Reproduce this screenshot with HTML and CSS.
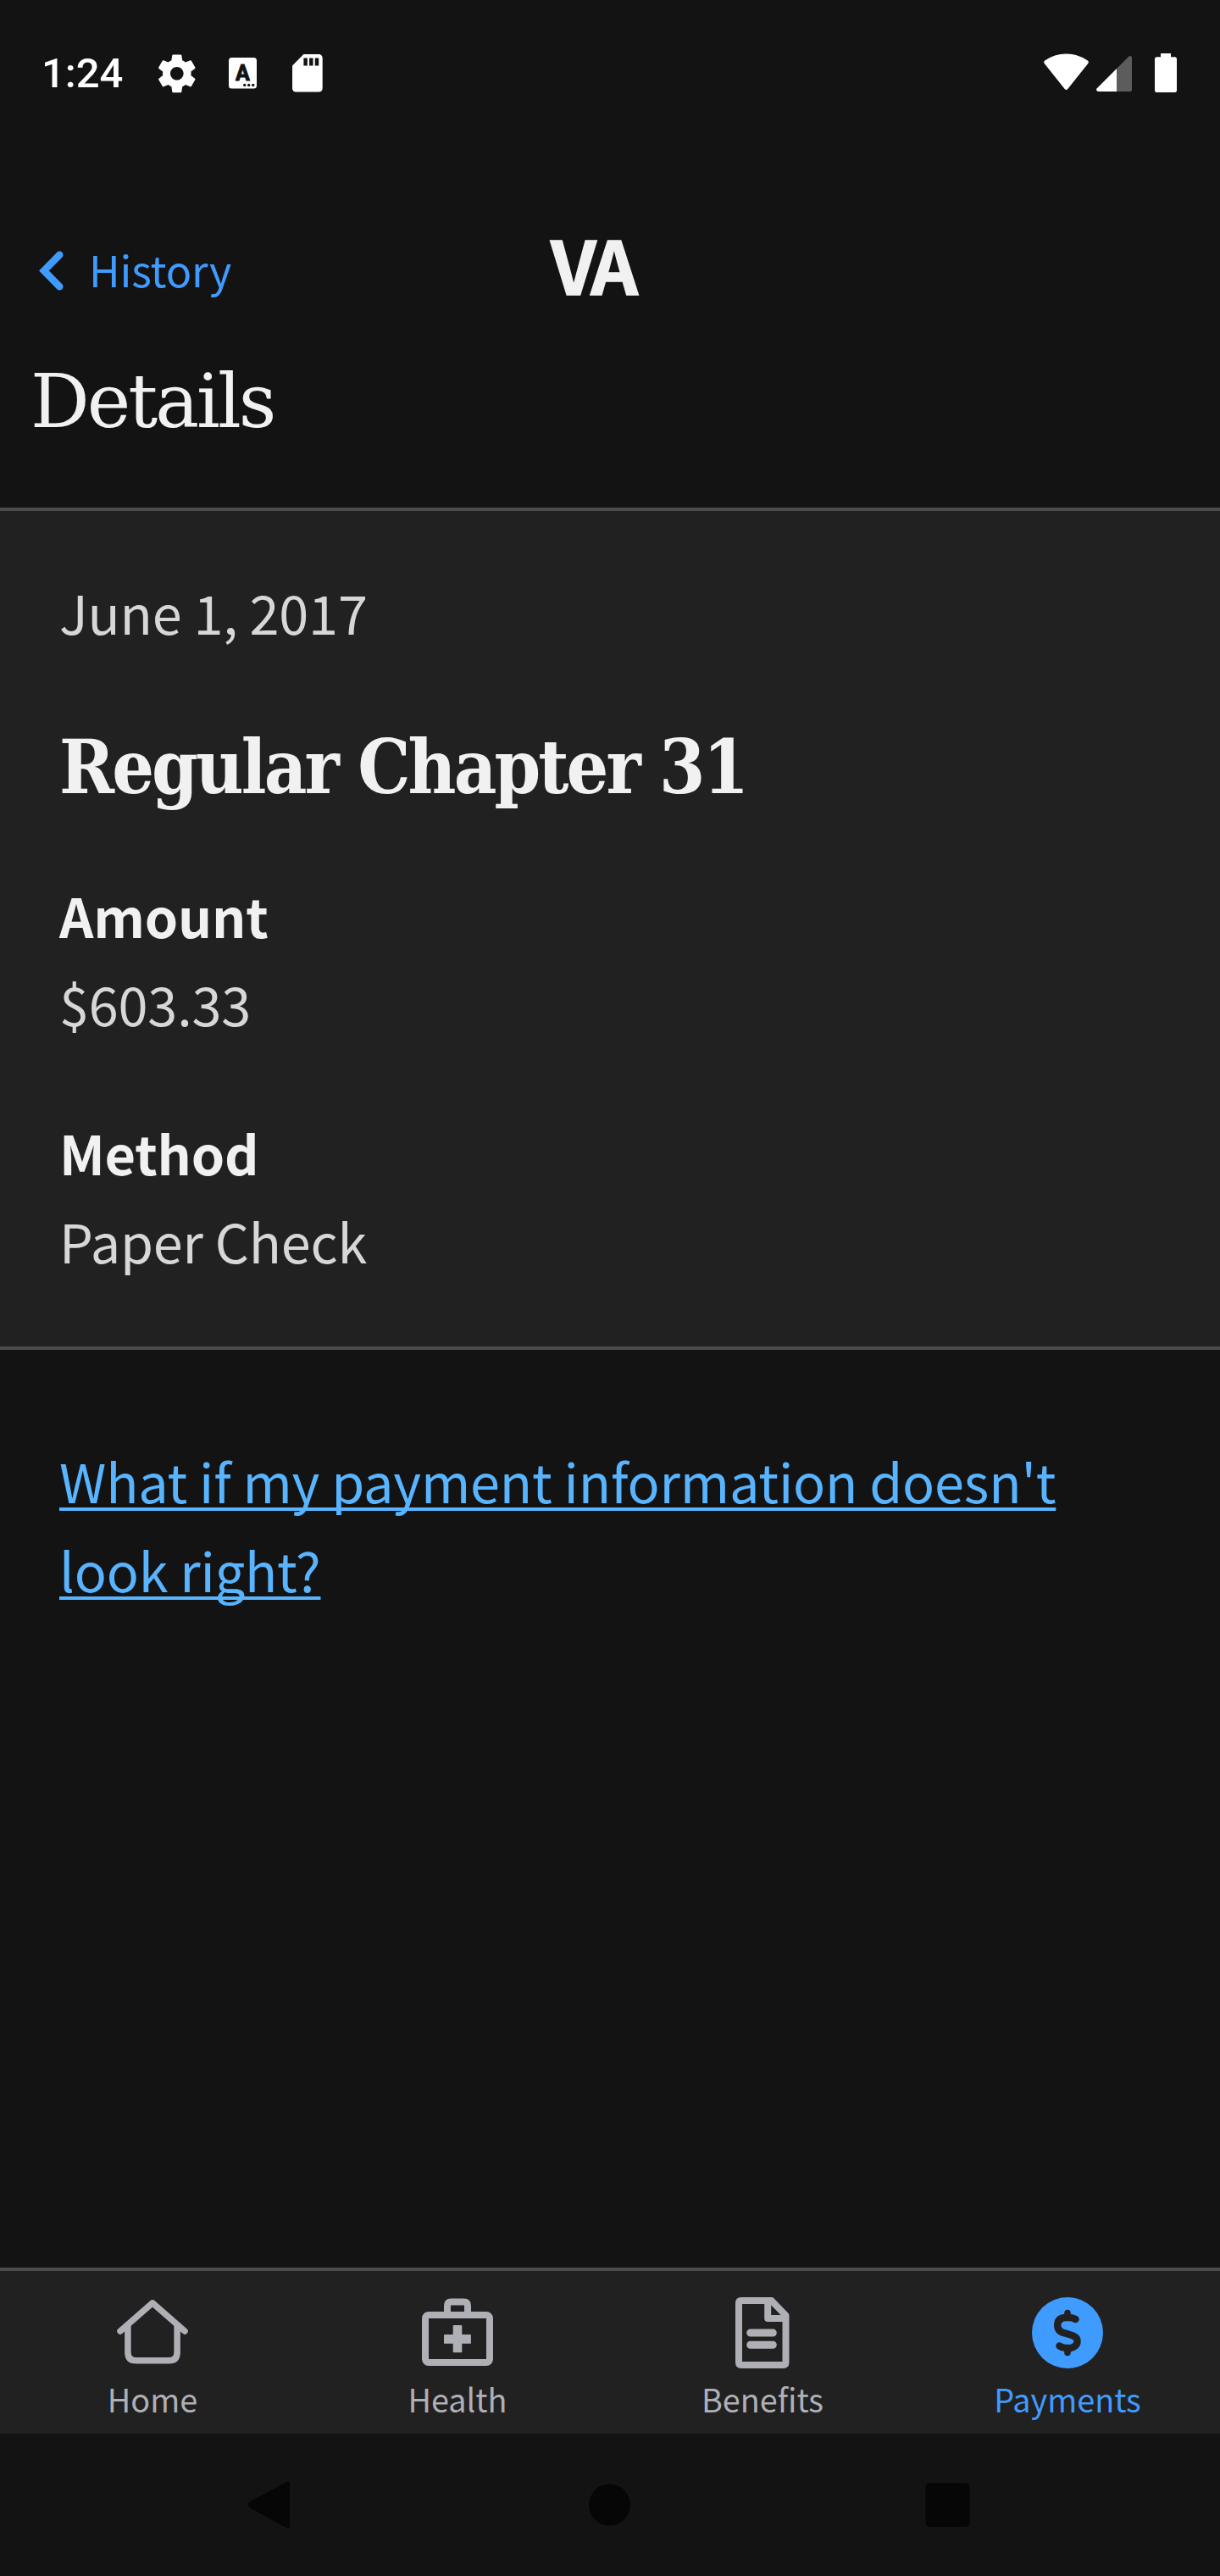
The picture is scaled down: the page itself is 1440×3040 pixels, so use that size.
FILE: index.html
```html
<!DOCTYPE html>
<html lang="en">
<head>
<meta charset="utf-8">
<title>Payment details</title>
<link rel="stylesheet" href="styles.css">
</head>
<body>
<div class="screen">
  <div class="status">
    <div class="status-left">
      <span class="clock">1:24</span>
      <svg class="s-gear" viewBox="0 0 24 24"><path fill="#fff" d="M19.43 12.98c.04-.32.07-.64.07-.98s-.03-.66-.07-.98l2.11-1.65c.19-.15.24-.42.12-.64l-2-3.46c-.12-.22-.39-.3-.61-.22l-2.49 1c-.52-.4-1.08-.73-1.69-.98l-.38-2.65C14.46 2.18 14.25 2 14 2h-4c-.25 0-.46.18-.49.42l-.38 2.65c-.61.25-1.17.59-1.69.98l-2.49-1c-.23-.09-.49 0-.61.22l-2 3.46c-.13.22-.07.49.12.64l2.11 1.65c-.04.32-.07.65-.07.98s.03.66.07.98l-2.11 1.65c-.19.15-.24.42-.12.64l2 3.46c.12.22.39.3.61.22l2.49-1c.52.4 1.08.73 1.69.98l.38 2.65c.03.24.24.42.49.42h4c.25 0 .46-.18.49-.42l.38-2.65c.61-.25 1.17-.59 1.69-.98l2.49 1c.23.09.49 0 .61-.22l2-3.46c.12-.22.07-.49-.12-.64l-2.11-1.65zM12 15.5c-1.93 0-3.5-1.57-3.5-3.5s1.57-3.5 3.5-3.5 3.5 1.57 3.5 3.5-1.57 3.5-3.5 3.5z"/></svg>
      <svg class="s-a" viewBox="0 0 33 37"><rect width="33" height="36.5" rx="3.5" fill="#fff"/><text x="16.5" y="26.8" text-anchor="middle" class="a-letter">A</text><g fill="#131313"><circle cx="18.7" cy="32.4" r="1.7"/><circle cx="23.7" cy="32.4" r="1.7"/><circle cx="28.7" cy="32.4" r="1.7"/></g></svg>
      <svg class="s-sd" viewBox="4 2 16 20"><path fill="#fff" d="M18 2h-8L4.02 8 4 20c0 1.1.9 2 2 2h12c1.1 0 2-.9 2-2V4c0-1.1-.9-2-2-2zm-6 6h-2V4h2v4zm3 0h-2V4h2v4zm3 0h-2V4h2v4z"/></svg>
    </div>
    <svg class="status-right" viewBox="1232 63 157 47">
      <path fill="#fff" d="M1232.8 75Q1231.4 73 1233.2 71.600Q1244.500 63.500 1258.500 63.500T1283.800 71.600Q1285.600 73 1284.200 75L1260.500 104.800Q1258.500 107.200 1256.500 104.800Z"/>
      <path fill="#5c5c5c" d="M1318 81V108H1334Q1336 108 1336 106V68Q1335.500 65 1332.500 66.500Z"/>
      <path fill="#fff" d="M1318 81V108H1296.500Q1293 107 1294.500 104.500Z"/>
      <path fill="#fff" d="M1370 63h12v4.300h4.500q2.500 0 2.500 2.500v36.700q0 2.500-2.500 2.500h-21q-2.500 0-2.500-2.500v-36.700q0-2.500 2.500-2.500h4.500z"/>
    </svg>
  </div>

  <header class="header">
    <div class="bar">
      <a class="back"><svg class="chev" viewBox="0 0 29 47"><path d="M24.300 4.700 5.800 23.500 24.300 42.300" fill="none" stroke="#409bff" stroke-width="8.400" stroke-linecap="round"/></svg>History</a>
      <span class="logo">VA</span>
    </div>
    <h1 class="title">Details</h1>
  </header>

  <main class="main">
    <section class="card">
      <p class="text">June 1, 2017</p>
      <h2 class="heading">Regular Chapter 31</h2>
      <dl class="facts">
        <div class="fact"><dt class="label">Amount</dt><dd class="text">$603.33</dd></div>
        <div class="fact"><dt class="label">Method</dt><dd class="text">Paper Check</dd></div>
      </dl>
    </section>
    <p class="help"><a class="link">What if my payment information doesn't look right?</a></p>
  </main>

  <nav class="tabs">
    <div class="tab">
      <svg class="icon" viewBox="0 0 84 84"><g fill="none" stroke="#afafb6" stroke-width="7.500" stroke-linecap="round" stroke-linejoin="round"><path d="M4 40 42 6.800 80 40"/><path d="M12.900 33V65Q12.900 74.800 22.500 74.800H61.500Q71.100 74.800 71.100 65V33"/></g></svg>
      <span>Home</span>
    </div>
    <div class="tab">
      <svg class="icon" viewBox="0 0 84 84"><g fill="none" stroke="#afafb6" stroke-width="8"><rect x="4" y="21" width="76" height="56" rx="4"/><path d="M30 20V10Q30 5.500 34.500 5.500H49.500Q54 5.500 54 10V20"/></g><path fill="#afafb6" d="M37.500 33h9q.8 0 .8.800V44h9.700q.9 0 .9.900v9q0 .9-.9.900H47.300v9.700q0 .8-.8.800h-9q-.8 0-.8-.8V54.800H26.900q-.9 0-.9-.9v-9q0-.9.9-.9h9.800V33.800q0-.8.800-.8z"/></svg>
      <span>Health</span>
    </div>
    <div class="tab">
      <svg class="icon" viewBox="0 0 84 84"><g fill="none" stroke="#afafb6" stroke-width="8" stroke-linejoin="round"><path d="M17 4H52.500L69.500 21.500V77Q69.500 80 66.500 80H17Q14 80 14 77V7Q14 4 17 4Z"/><path d="M48.200 5V25H68"/></g><path d="M27.700 42H54.300M27.700 56.200H54.300" stroke="#afafb6" stroke-width="9" stroke-linecap="round"/></svg>
      <span>Benefits</span>
    </div>
    <div class="tab active">
      <svg class="icon" viewBox="0 0 84 84"><circle cx="42" cy="42" r="42" fill="#409bff"/><g fill="none" stroke="#212121" stroke-width="8.400"><path d="M42 22V18.500M42 65.500V62" stroke-width="7.600" stroke-linecap="round"/><path d="M51.500 26Q48 24 44 24H39Q30.200 25 30.200 33T39.500 42.500L45 44.200Q53.600 46.500 53.600 52T46 60H40Q36 60 32.500 57.500" stroke-linecap="round"/></g></svg>
      <span>Payments</span>
    </div>
  </nav>

  <div class="sysnav">
    <svg viewBox="0 0 56 56"><path fill="#060606" d="M3.500 24.500 46 1.500Q51-1 51 3.500V52.500Q51 57 46 54.500L3.500 31.500Q0 28 3.500 24.500Z"/></svg>
    <svg viewBox="0 0 56 56"><circle cx="28.500" cy="28" r="24.500" fill="#060606"/></svg>
    <svg viewBox="0 0 56 56"><rect x="1.500" y="2" width="52" height="52" rx="5" fill="#060606"/></svg>
  </div>
</div>
</body>
</html>
```

FILE: styles.css
```css
* { box-sizing: border-box; }
body { margin: 0; background: #131313; }
h1, h2, p, dl, dd { margin: 0; font-weight: 400; }
svg { display: block; flex: none; }

.screen {
  width: 1440px;
  height: 3040px;
  display: flex;
  flex-direction: column;
  background: #131313;
  color: #f1f1f1;
  font-family: "Noto Sans CJK SC", "Noto Sans", sans-serif;
  overflow: hidden;
}

/* Android status bar */
.status {
  height: 173px;
  padding: 0 51px 0 49px;
  display: flex;
  justify-content: space-between;
  align-items: center;
}
.status-left { display: flex; align-items: center; }
.clock {
  width: 133px;
  font: 500 49px/58px Roboto, sans-serif;
  color: #fff;
}
.s-gear { width: 53.600px; height: 53.600px; }
.s-a { width: 33px; height: 37px; margin-left: 34.400px; }
.a-letter {
  font: 700 25px Roboto, sans-serif;
  fill: #131313;
  stroke: #131313;
  stroke-width: 1px;
  stroke-linejoin: round;
}
.s-sd { width: 35.700px; height: 44.600px; margin-left: 42.300px; }
.status-right { width: 157px; height: 47px; }

/* App header */
.header { height: 426px; }
.bar {
  height: 217px;
  display: grid;
  grid-template-columns: 650px 1fr;
}
.back {
  display: flex;
  align-items: center;
  height: 80px;
  margin-top: 105px;
  padding: 0 0 0 46px;
  gap: 30px;
  color: #409bff;
  font-size: 50.400px;
  line-height: 80px;
  letter-spacing: -0.15px;
}
.chev { width: 29px; height: 47px; margin-top: 3px; }
.logo {
  font-size: 87px;
  font-weight: 700;
  line-height: 100px;
  margin-top: 87px;
  letter-spacing: -5px;
  -webkit-text-stroke: 1.5px #f1f1f1;
}
.title, .heading {
  font-family: "DejaVu Serif", serif;
  line-height: 120px;
  white-space: nowrap;
}
.title {
  padding-left: 36px;
  margin-top: 24px;
  font-size: 87px;
  letter-spacing: -3px;
}

/* Content */
.main { flex: 1; }
.card {
  height: 994px;
  padding: 66px 70px 0;
  background: #212121;
  border-top: 4px solid #4b4b4b;
  border-bottom: 4px solid #4b4b4b;
}
.text, .label, .help {
  font-size: 63px;
  line-height: 105px;
  letter-spacing: -0.18px;
}
.text { color: #d6d7d9; }
.heading {
  margin-top: 72px;
  font-family: "DejaVu Serif Condensed", "DejaVu Serif", serif;
  font-stretch: condensed;
  font-size: 87px;
  font-weight: 700;
  letter-spacing: -2.900px;
}
.facts { margin-top: 61px; display: grid; gap: 70px; }
.label { font-weight: 700; }
.facts .text { margin-top: -1px; margin-bottom: 1px; }
.help { padding: 101px 70px 0; width: 1340px; }
.link {
  color: #58b4ff;
  text-decoration: underline;
  text-decoration-thickness: 4px;
  text-underline-offset: 5px;
  text-decoration-skip-ink: none;
}

/* Bottom tabs */
.tabs {
  height: 196px;
  display: grid;
  grid-template-columns: repeat(4, 1fr);
  background: #212121;
  border-top: 4px solid #4b4b4b;
}
.tab {
  display: flex;
  flex-direction: column;
  align-items: center;
  padding-top: 31px;
  color: #afafb6;
  font-size: 37.800px;
  line-height: 50px;
}
.tab span { margin-top: 11px; }
.active { color: #409bff; }
.icon { width: 84px; height: 84px; }

/* Android navigation keys */
.sysnav {
  height: 168px;
  padding: 0 293px 0 291px;
  display: flex;
  justify-content: space-between;
  align-items: center;
}
.sysnav svg { width: 56px; height: 56px; }
```
